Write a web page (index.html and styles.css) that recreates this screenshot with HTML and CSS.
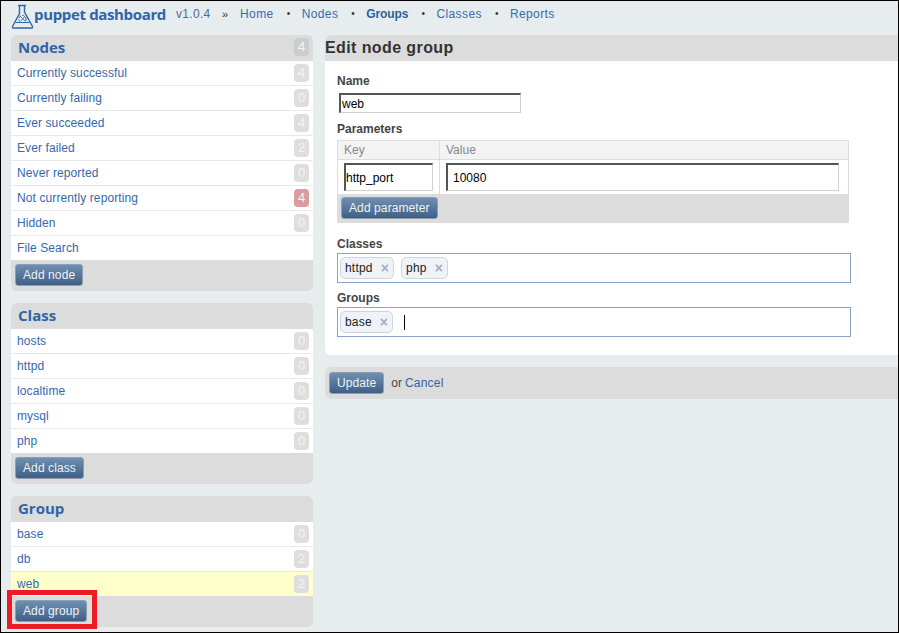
FILE: index.html
```html
<!DOCTYPE html>
<html lang="en">
<head>
  <meta charset="UTF-8">
  <title>Puppet Dashboard</title>
  <link rel="stylesheet" href="styles.css">
</head>
<body>
  <div class="header">
    <a class="logo" href="#">
      <svg width="23" height="25" viewBox="0 0 23 25" fill="none" stroke="#2f65a5" stroke-width="1.4">
        <path d="M7 1.500h8M13.500 1.500v6.500l8 14.500a1 1 0 0 1-1 1.500H2.500a1 1 0 0 1-1-1.500l7-13V2"/>
        <path d="M4.500 18.500h14" stroke-width="1"/>
        <circle cx="11.500" cy="15" r="3.600" stroke-width="1" stroke-dasharray="2.500 1.500"/>
        <path d="M9 12l5 5M14 12l-4 5" stroke-width="0.800"/>
      </svg>
      <span class="logo-text">puppet dashboard</span>
    </a>
    <span class="version">v1.0.4</span>
    <span class="raquo">»</span>
    <ul class="nav">
      <li><a href="#">Home</a></li>
      <li><a href="#">Nodes</a></li>
      <li><a href="#" class="active">Groups</a></li>
      <li><a href="#">Classes</a></li>
      <li><a href="#">Reports</a></li>
    </ul>
  </div>

  <div class="wrap">
    <div class="sidebar">
      <div class="panel">
        <h2 class="panel-title"><a href="#">Nodes</a><span class="badge head">4</span></h2>
        <ul class="rows">
          <li><a href="#">Currently successful</a><span class="badge">4</span></li>
          <li><a href="#">Currently failing</a><span class="badge">0</span></li>
          <li><a href="#">Ever succeeded</a><span class="badge">4</span></li>
          <li><a href="#">Ever failed</a><span class="badge">2</span></li>
          <li><a href="#">Never reported</a><span class="badge">0</span></li>
          <li><a href="#">Not currently reporting</a><span class="badge alert">4</span></li>
          <li><a href="#">Hidden</a><span class="badge">0</span></li>
          <li><a href="#">File Search</a></li>
        </ul>
        <div class="panel-foot"><a class="btn" href="#">Add node</a></div>
      </div>

      <div class="panel">
        <h2 class="panel-title"><a href="#">Class</a></h2>
        <ul class="rows">
          <li><a href="#">hosts</a><span class="badge">0</span></li>
          <li><a href="#">httpd</a><span class="badge">0</span></li>
          <li><a href="#">localtime</a><span class="badge">0</span></li>
          <li><a href="#">mysql</a><span class="badge">0</span></li>
          <li><a href="#">php</a><span class="badge">0</span></li>
        </ul>
        <div class="panel-foot"><a class="btn" href="#">Add class</a></div>
      </div>

      <div class="panel">
        <h2 class="panel-title"><a href="#">Group</a></h2>
        <ul class="rows">
          <li><a href="#">base</a><span class="badge">0</span></li>
          <li><a href="#">db</a><span class="badge">2</span></li>
          <li class="current"><a href="#">web</a><span class="badge">2</span></li>
        </ul>
        <div class="panel-foot"><a class="btn" href="#">Add group</a></div>
      </div>
    </div>

    <div class="main">
      <div class="card">
        <h1 class="card-title">Edit node group</h1>
        <div class="card-body">
          <label class="field-label">Name</label>
          <input class="text name-input" type="text" value="web">

          <label class="field-label params-label">Parameters</label>
          <div class="params">
            <div class="params-head">
              <span class="col-key">Key</span>
              <span class="col-value">Value</span>
            </div>
            <div class="params-row">
              <div class="col-key"><input class="text key-input" type="text" value="http_port"></div>
              <div class="col-value"><input class="text value-input" type="text" value="10080"></div>
            </div>
            <div class="params-foot"><a class="btn" href="#">Add parameter</a></div>
          </div>

          <label class="field-label classes-label">Classes</label>
          <div class="tokens">
            <span class="token">httpd<span class="token-x">×</span></span>
            <span class="token">php<span class="token-x">×</span></span>
          </div>

          <label class="field-label groups-label">Groups</label>
          <div class="tokens">
            <span class="token">base<span class="token-x">×</span></span>
            <span class="caret"></span>
          </div>
        </div>
      </div>

      <div class="actions">
        <a class="btn" href="#">Update</a>
        <span class="or">or</span>
        <a class="cancel" href="#">Cancel</a>
      </div>
    </div>
  </div>

  <div class="callout"></div>
</body>
</html>
```

FILE: styles.css
```css
* {
  box-sizing: border-box;
}

html, body {
  margin: 0;
  height: 633px;
  overflow: hidden;
}

body {
  position: relative;
  font-family: "Liberation Sans", Arial, sans-serif;
  font-size: 12px;
  background-color: #e7ecef;
  border: 1px solid #000;
  color: #333;
}

a {
  color: #2f65a5;
  text-decoration: none;
}

ul {
  list-style: none;
  margin: 0;
  padding: 0;
}

/* Top bar */
.header {
  display: flex;
  align-items: center;
  height: 34px;
  padding: 0 0 8px 10px;
}

.logo {
  display: flex;
  align-items: center;
  font-family: "Open Sans", sans-serif;
  font-weight: 700;
  font-size: 15px;
  white-space: nowrap;
  width: 165px;
}

.logo svg {
  flex: none;
  margin-top: 5px;
}

.logo-text {
  letter-spacing: -0.35px;
}

.version {
  color: #4d6f96;
  letter-spacing: 0.3px;
  width: 46px;
}

.raquo {
  color: #333;
  width: 18px;
  font-size: 11px;
}

.nav {
  display: flex;
}

.nav li {
  display: flex;
}

.nav li + li::before {
  content: "•";
  font-size: 10px;
  line-height: 14px;
  color: #333;
  width: 15px;
  margin-left: 13px;
}

.nav a {
  letter-spacing: 0.4px;
  color: #3a6ba8;
}

.nav a.active {
  font-weight: 700;
  letter-spacing: -0.1px;
  color: #2f5f9a;
}

/* Two columns */
.wrap {
  display: flex;
  align-items: flex-start;
  padding-left: 10px;
}

.sidebar {
  width: 302px;
  flex: none;
  margin-right: 12px;
}

.panel {
  background-color: #dcdcdc;
  border-radius: 6px;
  margin-bottom: 12px;
}

.panel-title {
  display: flex;
  justify-content: space-between;
  align-items: center;
  height: 26px;
  margin: 0;
  padding: 0 4px 2px 7px;
  font-size: 15px;
  font-family: "Open Sans", sans-serif;
  font-weight: 700;
}

.rows li {
  display: flex;
  justify-content: space-between;
  align-items: center;
  height: 25px;
  padding: 0 4px 0 6px;
  background-color: #fff;
  border-bottom: 1px solid #e8e8e8;
}

.rows li:last-child {
  height: 24px;
  border-bottom: none;
}

.rows a {
  letter-spacing: 0.1px;
  color: #3568ad;
}

.rows li.current {
  background-color: #ffffcc;
}

.badge {
  width: 15px;
  height: 18px;
  line-height: 18px;
  text-align: center;
  border-radius: 4px;
  background-color: #dedede;
  color: #f4f4f4;
  font-size: 13px;
  font-weight: 400;
  font-family: "Liberation Sans", Arial, sans-serif;
}

.badge.head {
  background-color: #cccccc;
}

.badge.alert {
  background-color: #dd9b9b;
}

.panel-foot {
  height: 31px;
  padding: 4px 4px 0;
}

.btn {
  display: inline-block;
  height: 22px;
  line-height: 20px;
  padding: 0 7px;
  border: 1px solid #8e9db0;
  border-radius: 3px;
  background: linear-gradient(#6f8fb2, #3f5f85);
  color: #f0f3f7;
  letter-spacing: 0.1px;
}

/* Edit form */
.main {
  flex: 1;
}

.card {
  background-color: #fff;
  border-radius: 6px 0 0 6px;
  height: 320px;
}

.card-title {
  height: 26px;
  line-height: 25px;
  margin: 0;
  background-color: #dcdcdc;
  border-radius: 6px 0 0 0;
  font-size: 16px;
  letter-spacing: 0.4px;
  color: #333;
}

.card-body {
  padding: 13px 12px 0;
}

.field-label {
  display: block;
  font-weight: 700;
  line-height: 14px;
  color: #444;
}

.text {
  display: block;
  font-family: "Liberation Sans", Arial, sans-serif;
  font-size: 12px;
  color: #000;
  background-color: #fff;
  border-width: 2px 1px 1px 2px;
  border-style: solid;
  border-color: #555 #d4d0c8 #d4d0c8 #555;
  padding: 0 1px;
  margin: 0;
  outline: none;
}

.name-input {
  width: 182px;
  height: 20px;
  margin: 5px 0 0 2px;
}

.params-label {
  margin-top: 9px;
}

.params {
  width: 512px;
  margin-top: 4px;
  border-top: 1px solid #ddd;
}

.params-head {
  display: flex;
  height: 19px;
  line-height: 18px;
  background-color: #f3f3f3;
  border-left: 1px solid #ddd;
  border-right: 1px solid #ddd;
  border-bottom: 1px solid #ddd;
  color: #888;
}

.col-key {
  width: 102px;
  flex: none;
  padding-left: 6px;
  border-right: 1px solid #ddd;
}

.col-value {
  flex: 1;
  padding-left: 6px;
}

.params-row {
  display: flex;
  height: 34px;
  border-left: 1px solid #ddd;
  border-right: 1px solid #ddd;
  align-items: stretch;
}

.params-row > div {
  padding-top: 3px;
}

.key-input {
  width: 89px;
  height: 28px;
  padding: 0;
}

.value-input {
  width: 393px;
  height: 28px;
  padding-left: 5px;
}

.params-foot {
  height: 29px;
  background-color: #dcdcdc;
  padding: 3px 4px;
}

.classes-label {
  margin-top: 14px;
}

.groups-label {
  margin-top: 8px;
}

.tokens {
  display: flex;
  align-items: center;
  gap: 7px;
  width: 514px;
  height: 30px;
  margin-top: 2px;
  padding-left: 2px;
  border: 1px solid #8da0c8;
}

.token {
  display: flex;
  justify-content: space-between;
  align-items: center;
  height: 22px;
  padding: 0 4px 0 4px;
  background-color: #eff2f7;
  border: 1px solid #ccd5e4;
  border-radius: 5px;
  color: #222;
  letter-spacing: 0.2px;
}

.token-x {
  margin-left: 8px;
  color: #a4abc4;
  font-size: 14px;
  font-weight: 700;
  line-height: 14px;
}

.caret {
  width: 1px;
  height: 15px;
  margin-left: 4px;
  background-color: #000;
}

.actions {
  display: flex;
  align-items: center;
  height: 32px;
  margin-top: 12px;
  padding-left: 4px;
  background-color: #dcdcdc;
  border-radius: 6px 0 0 6px;
}

.or {
  margin-left: 7px;
  color: #444;
}

.cancel {
  margin-left: 3px;
  letter-spacing: 0.2px;
}

/* Red highlight drawn over the screenshot */
.callout {
  position: absolute;
  left: 6px;
  top: 589px;
  width: 90px;
  height: 39px;
  border: 5px solid #ed1c24;
}
```
